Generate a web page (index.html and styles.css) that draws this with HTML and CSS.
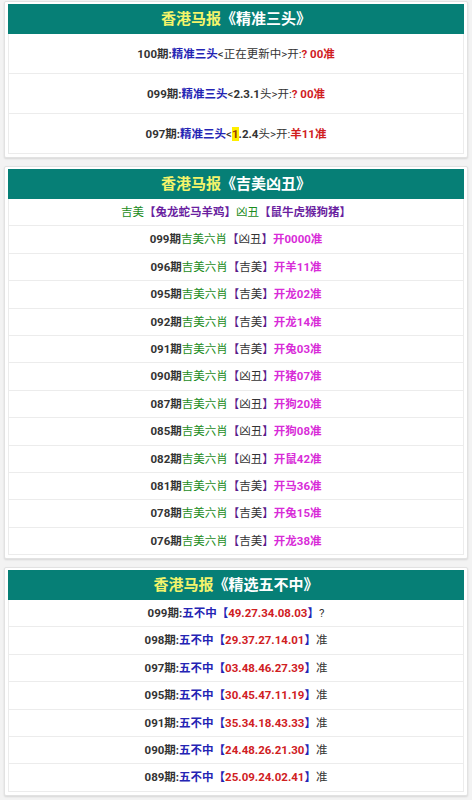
FILE: index.html
```html
<!DOCTYPE html>
<html lang="zh-CN">
<head>
    <meta charset="UTF-8">
    <meta name="viewport" content="width=device-width, initial-scale=1.0">
    <title>香港马报</title>
    <link rel="stylesheet" href="styles.css">
</head>
<body>
    <div class="box">
        <div class="title"><span class="yel">香港马报</span>《精准三头》</div>
        <div class="row tall"><b>100期:</b><span class="blue">精准三头</span>&lt;正在更新中&gt;开:<span class="red">? 00准</span></div>
        <div class="row tall"><b>099期:</b><span class="blue">精准三头</span>&lt;<b>2.3.1</b>头&gt;开:<span class="red">? 00准</span></div>
        <div class="row tall"><b>097期:</b><span class="blue">精准三头</span>&lt;<b class="hit">1</b><b>.2.4</b>头&gt;开:<span class="red">羊11准</span></div>
    </div>

    <div class="box">
        <div class="title"><span class="yel">香港马报</span>《吉美凶丑》</div>
        <div class="row"><span class="green">吉美</span><span class="purple">【兔龙蛇马羊鸡】</span><span class="green">凶丑</span><span class="purple">【鼠牛虎猴狗猪】</span></div>
        <div class="row"><b>099期</b><span class="green">吉美六肖</span><span class="pb">【</span>凶丑<span class="pb">】</span><span class="pink">开0000准</span></div>
        <div class="row"><b>096期</b><span class="green">吉美六肖</span><span class="pb">【</span>吉美<span class="pb">】</span><span class="pink">开羊11准</span></div>
        <div class="row"><b>095期</b><span class="green">吉美六肖</span><span class="pb">【</span>吉美<span class="pb">】</span><span class="pink">开龙02准</span></div>
        <div class="row"><b>092期</b><span class="green">吉美六肖</span><span class="pb">【</span>吉美<span class="pb">】</span><span class="pink">开龙14准</span></div>
        <div class="row"><b>091期</b><span class="green">吉美六肖</span><span class="pb">【</span>吉美<span class="pb">】</span><span class="pink">开兔03准</span></div>
        <div class="row"><b>090期</b><span class="green">吉美六肖</span><span class="pb">【</span>凶丑<span class="pb">】</span><span class="pink">开猪07准</span></div>
        <div class="row"><b>087期</b><span class="green">吉美六肖</span><span class="pb">【</span>凶丑<span class="pb">】</span><span class="pink">开狗20准</span></div>
        <div class="row"><b>085期</b><span class="green">吉美六肖</span><span class="pb">【</span>凶丑<span class="pb">】</span><span class="pink">开狗08准</span></div>
        <div class="row"><b>082期</b><span class="green">吉美六肖</span><span class="pb">【</span>凶丑<span class="pb">】</span><span class="pink">开鼠42准</span></div>
        <div class="row"><b>081期</b><span class="green">吉美六肖</span><span class="pb">【</span>吉美<span class="pb">】</span><span class="pink">开马36准</span></div>
        <div class="row"><b>078期</b><span class="green">吉美六肖</span><span class="pb">【</span>吉美<span class="pb">】</span><span class="pink">开兔15准</span></div>
        <div class="row"><b>076期</b><span class="green">吉美六肖</span><span class="pb">【</span>吉美<span class="pb">】</span><span class="pink">开龙38准</span></div>
    </div>

    <div class="box">
        <div class="title"><span class="yel">香港马报</span>《精选五不中》</div>
        <div class="row"><b>099期:</b><span class="blue">五不中【</span><span class="red">49.27.34.08.03</span><span class="blue">】</span>?</div>
        <div class="row"><b>098期:</b><span class="blue">五不中【</span><span class="red">29.37.27.14.01</span><span class="blue">】</span>准</div>
        <div class="row"><b>097期:</b><span class="blue">五不中【</span><span class="red">03.48.46.27.39</span><span class="blue">】</span>准</div>
        <div class="row"><b>095期:</b><span class="blue">五不中【</span><span class="red">30.45.47.11.19</span><span class="blue">】</span>准</div>
        <div class="row"><b>091期:</b><span class="blue">五不中【</span><span class="red">35.34.18.43.33</span><span class="blue">】</span>准</div>
        <div class="row"><b>090期:</b><span class="blue">五不中【</span><span class="red">24.48.26.21.30</span><span class="blue">】</span>准</div>
        <div class="row"><b>089期:</b><span class="blue">五不中【</span><span class="red">25.09.24.02.41</span><span class="blue">】</span>准</div>
    </div>
</body>
</html>
```

FILE: styles.css
```css
body {
    margin: 0;
    padding: 1px 4px 0;
    background-color: #f3f3f3;
    font-family: Roboto, "Noto Sans CJK SC", sans-serif;
    font-size: 11.5px;
    color: #333;
}
.box {
    background-color: #fff;
    border: 1px solid #e2e2e2;
    border-radius: 2px;
    box-shadow: 0 1px 2px rgba(0, 0, 0, 0.12);
    padding: 2px 3px 3px;
    margin-bottom: 8px;
}
.title {
    height: 30px;
    line-height: 30px;
    background-color: #067f76;
    color: #fff;
    text-align: center;
    font-size: 15px;
    font-weight: bold;
}
.yel {
    color: #f4f46a;
}
.row {
    box-sizing: border-box;
    height: 27.4px;
    line-height: 27px;
    text-align: center;
    border: 1px solid #ececec;
    border-top: none;
    white-space: nowrap;
}
.row.tall {
    height: 40px;
    line-height: 40px;
}
b {
    font-weight: bold;
}
.blue {
    color: #2424b4;
    font-weight: bold;
}
.red {
    color: #d0201f;
    font-weight: bold;
}
.hit {
    background-color: #ffee00;
    color: #9a3b00;
}
.green {
    color: #1c8c1c;
}
.purple {
    color: #6a1fa0;
    font-weight: bold;
}
.pb {
    color: #5a1a8a;
}
.pink {
    color: #d82cd8;
    font-weight: bold;
}
```
